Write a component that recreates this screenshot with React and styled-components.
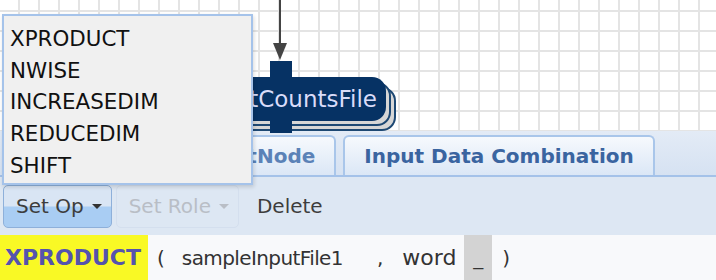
import * as React from "react";
import styled, { createGlobalStyle } from "styled-components";

const GlobalStyle = createGlobalStyle`
  html, body {
    margin: 0;
    padding: 0;
    overflow: hidden;
    background: #ffffff;
  }
  body {
    font-family: "DejaVu Sans", "Liberation Sans", sans-serif;
  }
`;

const Page = styled.div`
  position: relative;
  width: 716px;
  height: 280px;
  display: flex;
  flex-direction: column;
  overflow: hidden;
`;

const Canvas = styled.div`
  position: relative;
  height: 131px;
  flex: none;
  background-color: #ffffff;
  background-image: linear-gradient(to right, #e4e4e4 2px, transparent 2px),
    linear-gradient(to bottom, #e4e4e4 2px, transparent 2px);
  background-size: 20px 20px;
  background-position: 18px 10px;
`;

const Arrow = styled.svg`
  position: absolute;
  left: 272px;
  top: 0;
`;

const NodeWrap = styled.div`
  position: absolute;
  left: 170px;
  top: 77px;
  width: 216px;
  height: 44px;
`;

const NodeShadow = styled.div`
  position: absolute;
  left: ${(p) => p.$off}px;
  top: ${(p) => p.$off}px;
  width: 100%;
  height: 100%;
  box-sizing: border-box;
  border: 2px solid #1d4873;
  border-radius: 0 14px 14px 0;
  background: #d6d6d6;
`;

const NodeBody = styled.div`
  position: relative;
  height: 100%;
  display: flex;
  align-items: center;
  justify-content: flex-end;
  padding-right: 9px;
  box-sizing: border-box;
  background: #063264;
  border-radius: 14px;
  color: #d9dcf9;
  font-size: 23px;
`;

const Port = styled.div`
  position: absolute;
  left: 100px;
  width: 22px;
  height: ${(p) => p.$h}px;
  background: #063264;
  ${(p) => (p.$top ? `top: -${p.$h}px;` : `bottom: -${p.$h}px;`)}
`;

const TabStrip = styled.div`
  height: 46px;
  flex: none;
  display: flex;
  align-items: flex-end;
  gap: 7px;
  padding-left: 157px;
  box-sizing: border-box;
  background: linear-gradient(#e3ebf6, #d6e2f2);
  border-bottom: 2px solid #a4c2e9;
`;

const Tab = styled.div`
  height: 40px;
  box-sizing: border-box;
  display: flex;
  align-items: center;
  padding: 0 19px;
  border: 2px solid #a9c6ea;
  border-bottom: none;
  border-radius: 6px 6px 0 0;
  background: linear-gradient(#f6f9fd, #dbe7f6);
  color: ${(p) => (p.$active ? "#3a64a0" : "#5b82b7")};
  font-weight: bold;
  font-size: 20px;
  white-space: nowrap;
`;

const Toolbar = styled.div`
  height: 58px;
  flex: none;
  display: flex;
  align-items: center;
  gap: 4px;
  padding-left: 3px;
  box-sizing: border-box;
  background: #dde7f3;
`;

const ToolButton = styled.div`
  height: 43px;
  box-sizing: border-box;
  display: flex;
  align-items: center;
  gap: 8px;
  padding: 0 ${(p) => (p.$plain ? 12 : 9)}px 0 12px;
  margin-left: ${(p) => (p.$plain ? 1 : 0)}px;
  font-size: 20px;
  border-radius: 5px;
  border: 1px solid
    ${(p) => (p.$pressed ? "#8eb0da" : p.$disabled ? "#d4dfee" : "transparent")};
  color: ${(p) => (p.$disabled ? "#b9bec6" : "#3d3d3d")};
  background: ${(p) =>
    p.$pressed
      ? "linear-gradient(#d9e5f4 0%, #d9e5f4 48%, #a9cdf3 52%, #a9cdf3 100%)"
      : "transparent"};
`;

const Caret = styled.span`
  width: 0;
  height: 0;
  border-left: 5px solid transparent;
  border-right: 5px solid transparent;
  border-top: 5px solid ${(p) => (p.$disabled ? "#b9bec6" : "#333333")};
`;

const ExprRow = styled.div`
  flex: 1;
  display: flex;
  align-items: stretch;
  background: #f8f9fb;
  font-size: 20px;
  color: #333333;
`;

const OpToken = styled.div`
  display: flex;
  align-items: center;
  padding: 0 7px 0 5px;
  background: #f9f925;
  color: #5553ad;
  font-weight: bold;
  font-size: 22px;
`;

const Token = styled.div`
  display: flex;
  align-items: center;
  padding: 0 ${(p) => p.$pr ?? 8}px 0 ${(p) => p.$pl ?? 8}px;
  background: ${(p) => (p.$empty ? "#d3d3d3" : "transparent")};
  letter-spacing: ${(p) => (p.$tight ? "-0.6px" : "normal")};
  font-size: ${(p) => (p.$big ? "22px" : "inherit")};
`;

const Menu = styled.div`
  position: absolute;
  left: 2px;
  top: 14px;
  width: 251px;
  height: 171px;
  box-sizing: border-box;
  padding-top: 7px;
  background: #f0f0f0;
  border: 2px solid #a5c3ea;
  box-shadow: 1px 2px 4px rgba(0, 0, 0, 0.15);
`;

const MenuItem = styled.div`
  height: 31.7px;
  line-height: 31.7px;
  padding-left: 6px;
  font-size: 21.4px;
  color: #111111;
`;

const ops = ["XPRODUCT", "NWISE", "INCREASEDIM", "REDUCEDIM", "SHIFT"];

export default function App() {
  return (
    <Page>
      <GlobalStyle />
      <Canvas>
        <Arrow width="16" height="62" viewBox="0 0 16 62">
          <line x1="8" y1="0" x2="8" y2="46" stroke="#444" strokeWidth="2" />
          <polygon points="1,43 15,43 8,60" fill="#444" />
        </Arrow>
        <NodeWrap>
          <NodeShadow $off={10} />
          <NodeShadow $off={5} />
          <Port $top $h={16} />
          <Port $h={12} />
          <NodeBody>outputCountsFile</NodeBody>
        </NodeWrap>
      </Canvas>
      <TabStrip>
        <Tab>OutputNode</Tab>
        <Tab $active>Input Data Combination</Tab>
      </TabStrip>
      <Toolbar>
        <ToolButton $pressed>
          Set Op <Caret />
        </ToolButton>
        <ToolButton $disabled>
          Set Role <Caret $disabled />
        </ToolButton>
        <ToolButton $plain>Delete</ToolButton>
      </Toolbar>
      <ExprRow>
        <OpToken>XPRODUCT</OpToken>
        <Token $pl={9} $pr={9}>(</Token>
        <Token $tight>sampleInputFile1</Token>
        <Token $pl={26} $pr={11}>,</Token>
        <Token $big>word</Token>
        <Token $empty $pl={9} $pr={9}>_</Token>
        <Token $pl={10} $pr={10}>)</Token>
      </ExprRow>
      <Menu>
        {ops.map((op) => (
          <MenuItem key={op}>{op}</MenuItem>
        ))}
      </Menu>
    </Page>
  );
}
